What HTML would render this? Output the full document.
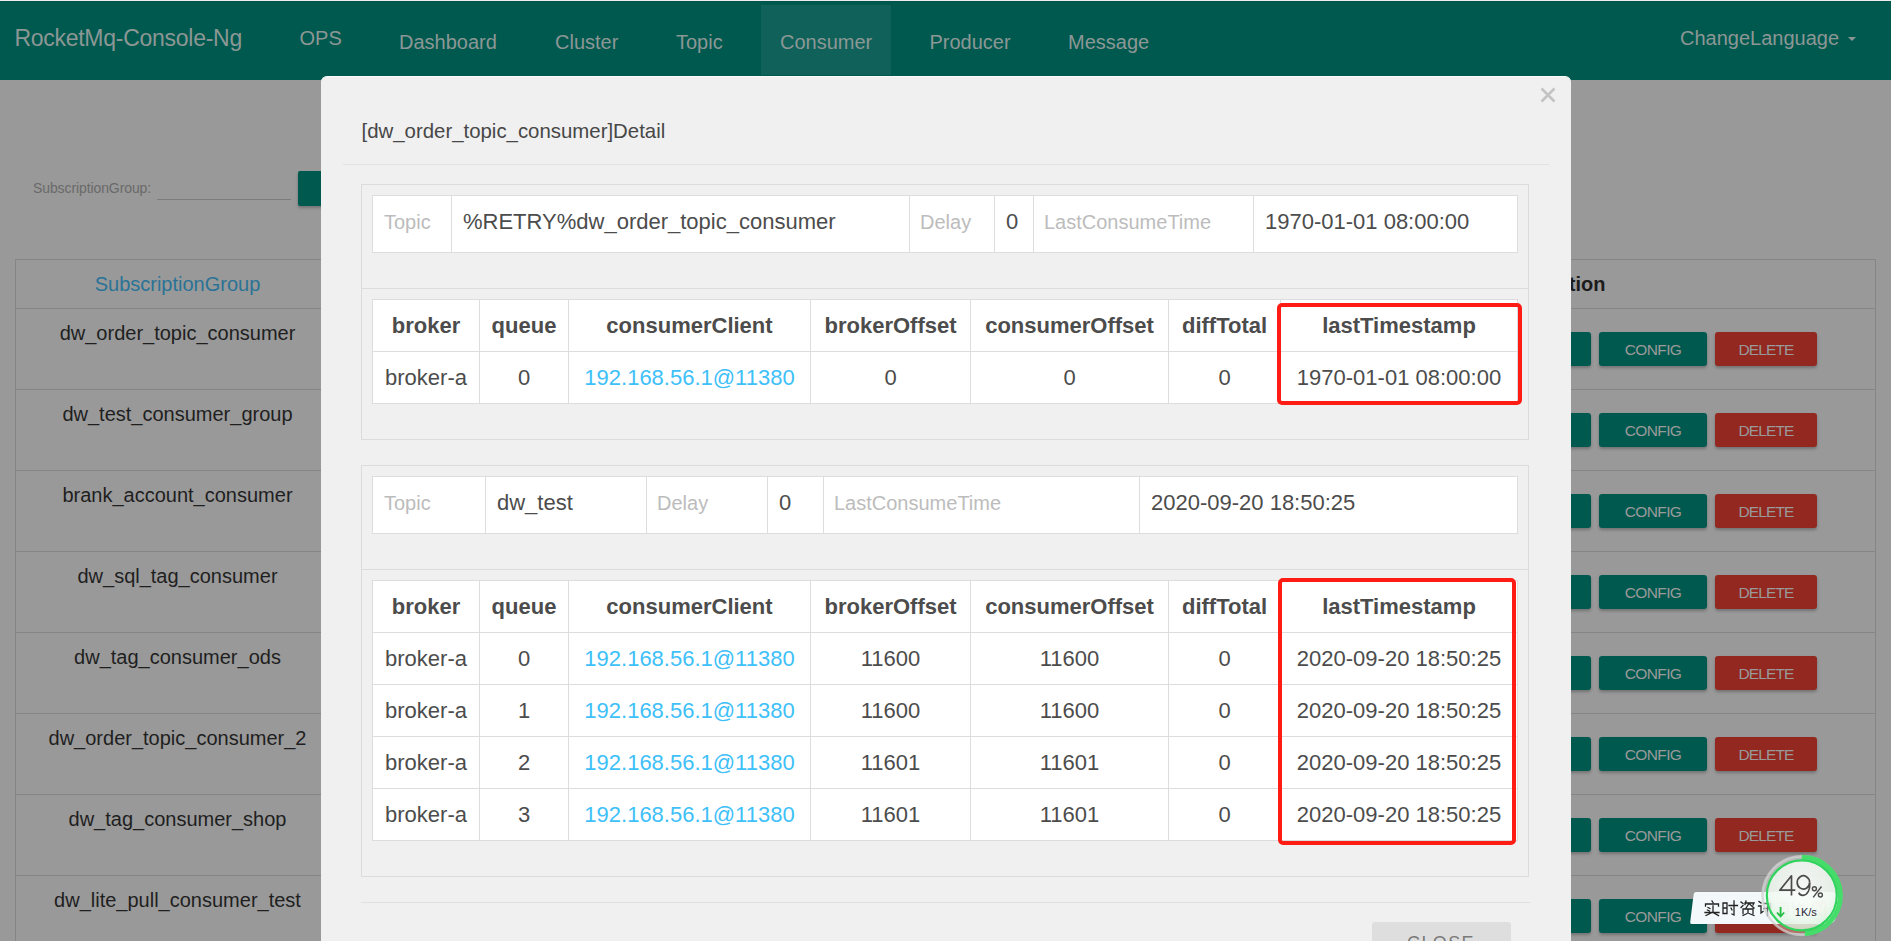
<!DOCTYPE html>
<html><head><meta charset="utf-8"><title>RocketMq-Console-Ng</title>
<style>
html,body{margin:0;padding:0;}
body{width:1891px;height:941px;overflow:hidden;position:relative;background:#999999;font-family:"Liberation Sans", sans-serif;}
.t{position:absolute;white-space:nowrap;line-height:1;font-family:"Liberation Sans", sans-serif;}
.btn{position:absolute;height:34px;line-height:35px;text-align:center;color:#9a9a9a;font-size:15.5px;letter-spacing:-0.6px;border-radius:3px;box-shadow:0 2px 3px rgba(0,0,0,0.25);font-family:"Liberation Sans", sans-serif;}
</style></head><body>
<div style="position:absolute;left:0px;top:0px;width:1891px;height:1px;background:#eeeaee"></div>
<div style="position:absolute;left:0px;top:1px;width:1891px;height:79px;background:#00594f"></div>
<div style="position:absolute;left:0px;top:1px;width:1891px;height:1px;background:#00534a"></div>
<div style="position:absolute;left:761px;top:5px;width:130px;height:70px;background:#0f6159"></div>
<div class="t" style="left:14.4px;top:27.1px;font-size:23px;color:#8c9795;font-weight:400;letter-spacing:-0.27px">RocketMq-Console-Ng</div>
<div class="t" style="left:299.5px;top:27.5px;font-size:20px;color:#8c9795;font-weight:400;">OPS</div>
<div class="t" style="left:399px;top:32px;font-size:20px;color:#8c9795;font-weight:400;">Dashboard</div>
<div class="t" style="left:555px;top:32px;font-size:20px;color:#8c9795;font-weight:400;">Cluster</div>
<div class="t" style="left:676px;top:32px;font-size:20px;color:#8c9795;font-weight:400;">Topic</div>
<div class="t" style="left:780px;top:32px;font-size:20px;color:#8c9795;font-weight:400;">Consumer</div>
<div class="t" style="left:929.5px;top:32px;font-size:20px;color:#8c9795;font-weight:400;">Producer</div>
<div class="t" style="left:1068px;top:32px;font-size:20px;color:#8c9795;font-weight:400;">Message</div>
<div class="t" style="left:1680px;top:28px;font-size:20px;color:#8c9795;font-weight:400;">ChangeLanguage</div>
<div style="position:absolute;left:1847.5px;top:37px;width:0;height:0;border-left:4.6px solid transparent;border-right:4.6px solid transparent;border-top:4.8px solid #8c9795"></div>
<div class="t" style="left:33px;top:181px;font-size:14px;color:#6a6a6a;font-weight:400;letter-spacing:-0.1px">SubscriptionGroup:</div>
<div style="position:absolute;left:157px;top:199px;width:134px;height:1px;background:#7c7c7c"></div>
<div style="position:absolute;left:298px;top:171px;width:40px;height:35px;background:#00594f;border-radius:2px;box-shadow:0 2px 3px rgba(0,0,0,0.25)"></div>
<div style="position:absolute;left:15px;top:259px;width:1861px;height:700px;border:1px solid #858585;box-sizing:border-box"></div>
<div style="position:absolute;left:15px;top:308px;width:1861px;height:1px;background:#858585"></div>
<div style="position:absolute;left:15px;top:389px;width:1861px;height:1px;background:#858585"></div>
<div style="position:absolute;left:15px;top:470px;width:1861px;height:1px;background:#858585"></div>
<div style="position:absolute;left:15px;top:551px;width:1861px;height:1px;background:#858585"></div>
<div style="position:absolute;left:15px;top:632px;width:1861px;height:1px;background:#858585"></div>
<div style="position:absolute;left:15px;top:713px;width:1861px;height:1px;background:#858585"></div>
<div style="position:absolute;left:15px;top:794px;width:1861px;height:1px;background:#858585"></div>
<div style="position:absolute;left:15px;top:875px;width:1861px;height:1px;background:#858585"></div>
<div class="t" style="left:16px;width:323px;text-align:center;top:274px;font-size:20px;color:#2a7396;font-weight:400;">SubscriptionGroup</div>
<div class="t" style="left:1500.5px;top:274px;font-size:20px;color:#1c1c1c;font-weight:700;width:105px;text-align:right">Operation</div>
<div class="t" style="left:16px;width:323px;text-align:center;top:323px;font-size:20px;color:#1f1f1f;font-weight:400;">dw_order_topic_consumer</div>
<div style="position:absolute;left:1540px;top:332px;width:51px;height:34px;background:#00594f;border-radius:3px;box-shadow:0 2px 3px rgba(0,0,0,0.25)"></div>
<div class="btn" style="left:1599px;top:332px;width:108px;background:#00594f">CONFIG</div>
<div class="btn" style="left:1715px;top:332px;width:102px;background:#922820;letter-spacing:-0.9px">DELETE</div>
<div class="t" style="left:16px;width:323px;text-align:center;top:404px;font-size:20px;color:#1f1f1f;font-weight:400;">dw_test_consumer_group</div>
<div style="position:absolute;left:1540px;top:413px;width:51px;height:34px;background:#00594f;border-radius:3px;box-shadow:0 2px 3px rgba(0,0,0,0.25)"></div>
<div class="btn" style="left:1599px;top:413px;width:108px;background:#00594f">CONFIG</div>
<div class="btn" style="left:1715px;top:413px;width:102px;background:#922820;letter-spacing:-0.9px">DELETE</div>
<div class="t" style="left:16px;width:323px;text-align:center;top:485px;font-size:20px;color:#1f1f1f;font-weight:400;">brank_account_consumer</div>
<div style="position:absolute;left:1540px;top:494px;width:51px;height:34px;background:#00594f;border-radius:3px;box-shadow:0 2px 3px rgba(0,0,0,0.25)"></div>
<div class="btn" style="left:1599px;top:494px;width:108px;background:#00594f">CONFIG</div>
<div class="btn" style="left:1715px;top:494px;width:102px;background:#922820;letter-spacing:-0.9px">DELETE</div>
<div class="t" style="left:16px;width:323px;text-align:center;top:566px;font-size:20px;color:#1f1f1f;font-weight:400;">dw_sql_tag_consumer</div>
<div style="position:absolute;left:1540px;top:575px;width:51px;height:34px;background:#00594f;border-radius:3px;box-shadow:0 2px 3px rgba(0,0,0,0.25)"></div>
<div class="btn" style="left:1599px;top:575px;width:108px;background:#00594f">CONFIG</div>
<div class="btn" style="left:1715px;top:575px;width:102px;background:#922820;letter-spacing:-0.9px">DELETE</div>
<div class="t" style="left:16px;width:323px;text-align:center;top:647px;font-size:20px;color:#1f1f1f;font-weight:400;">dw_tag_consumer_ods</div>
<div style="position:absolute;left:1540px;top:656px;width:51px;height:34px;background:#00594f;border-radius:3px;box-shadow:0 2px 3px rgba(0,0,0,0.25)"></div>
<div class="btn" style="left:1599px;top:656px;width:108px;background:#00594f">CONFIG</div>
<div class="btn" style="left:1715px;top:656px;width:102px;background:#922820;letter-spacing:-0.9px">DELETE</div>
<div class="t" style="left:16px;width:323px;text-align:center;top:728px;font-size:20px;color:#1f1f1f;font-weight:400;">dw_order_topic_consumer_2</div>
<div style="position:absolute;left:1540px;top:737px;width:51px;height:34px;background:#00594f;border-radius:3px;box-shadow:0 2px 3px rgba(0,0,0,0.25)"></div>
<div class="btn" style="left:1599px;top:737px;width:108px;background:#00594f">CONFIG</div>
<div class="btn" style="left:1715px;top:737px;width:102px;background:#922820;letter-spacing:-0.9px">DELETE</div>
<div class="t" style="left:16px;width:323px;text-align:center;top:809px;font-size:20px;color:#1f1f1f;font-weight:400;">dw_tag_consumer_shop</div>
<div style="position:absolute;left:1540px;top:818px;width:51px;height:34px;background:#00594f;border-radius:3px;box-shadow:0 2px 3px rgba(0,0,0,0.25)"></div>
<div class="btn" style="left:1599px;top:818px;width:108px;background:#00594f">CONFIG</div>
<div class="btn" style="left:1715px;top:818px;width:102px;background:#922820;letter-spacing:-0.9px">DELETE</div>
<div class="t" style="left:16px;width:323px;text-align:center;top:890px;font-size:20px;color:#1f1f1f;font-weight:400;">dw_lite_pull_consumer_test</div>
<div style="position:absolute;left:1540px;top:899px;width:51px;height:34px;background:#00594f;border-radius:3px;box-shadow:0 2px 3px rgba(0,0,0,0.25)"></div>
<div class="btn" style="left:1599px;top:899px;width:108px;background:#00594f">CONFIG</div>
<div class="btn" style="left:1715px;top:899px;width:102px;background:#922820;letter-spacing:-0.9px">DELETE</div>
<div id="modal" style="position:absolute;left:321px;top:76px;width:1250px;height:900px;background:#f0f0f0;border-radius:6px;border-top:1px solid #fafafa;box-sizing:border-box"></div>
<svg style="position:absolute;left:1539px;top:86px" width="18" height="18" viewBox="0 0 18 18"><path d="M2.5 2.5L15.5 15.5M15.5 2.5L2.5 15.5" stroke="#c3c3c3" stroke-width="2.6" fill="none"/></svg>
<div class="t" style="left:361.5px;top:121px;font-size:20.4px;color:#474747;font-weight:400;">[dw_order_topic_consumer]Detail</div>
<div style="position:absolute;left:343px;top:164px;width:1206px;height:1px;background:#e2e2e2"></div>
<div style="position:absolute;left:361px;top:184px;width:1168px;height:256px;border:1px solid #dcdcdc;box-sizing:border-box"></div>
<div style="position:absolute;left:361px;top:288px;width:1168px;height:1px;background:#dcdcdc"></div>
<div style="position:absolute;left:372px;top:195px;width:1146px;height:58px;background:#fff;border:1px solid #dddddd;box-sizing:border-box"></div>
<div style="position:absolute;left:451px;top:195px;width:1px;height:58px;background:#dddddd"></div>
<div style="position:absolute;left:909px;top:195px;width:1px;height:58px;background:#dddddd"></div>
<div style="position:absolute;left:994px;top:195px;width:1px;height:58px;background:#dddddd"></div>
<div style="position:absolute;left:1033px;top:195px;width:1px;height:58px;background:#dddddd"></div>
<div style="position:absolute;left:1253px;top:195px;width:1px;height:58px;background:#dddddd"></div>
<div class="t" style="left:384px;top:212px;font-size:20px;color:#bcbcbc;font-weight:400;">Topic</div>
<div class="t" style="left:463px;top:211px;font-size:22px;color:#4c4c4c;font-weight:400;">%RETRY%dw_order_topic_consumer</div>
<div class="t" style="left:920px;top:212px;font-size:20px;color:#bcbcbc;font-weight:400;">Delay</div>
<div class="t" style="left:1006px;top:211px;font-size:22px;color:#4c4c4c;font-weight:400;">0</div>
<div class="t" style="left:1044px;top:212px;font-size:20px;color:#bcbcbc;font-weight:400;">LastConsumeTime</div>
<div class="t" style="left:1265px;top:211px;font-size:22px;color:#4c4c4c;font-weight:400;">1970-01-01 08:00:00</div>
<div style="position:absolute;left:372px;top:299px;width:1146px;height:105px;background:#fff;border:1px solid #dddddd;box-sizing:border-box"></div>
<div style="position:absolute;left:479px;top:299px;width:1px;height:105px;background:#dddddd"></div>
<div style="position:absolute;left:568px;top:299px;width:1px;height:105px;background:#dddddd"></div>
<div style="position:absolute;left:810px;top:299px;width:1px;height:105px;background:#dddddd"></div>
<div style="position:absolute;left:970px;top:299px;width:1px;height:105px;background:#dddddd"></div>
<div style="position:absolute;left:1168px;top:299px;width:1px;height:105px;background:#dddddd"></div>
<div style="position:absolute;left:1280px;top:299px;width:1px;height:105px;background:#dddddd"></div>
<div style="position:absolute;left:372px;top:351px;width:1146px;height:1px;background:#dddddd"></div>
<div class="t" style="left:373px;width:106px;text-align:center;top:315px;font-size:22px;color:#4c4c4c;font-weight:700;">broker</div>
<div class="t" style="left:480px;width:88px;text-align:center;top:315px;font-size:22px;color:#4c4c4c;font-weight:700;">queue</div>
<div class="t" style="left:569px;width:241px;text-align:center;top:315px;font-size:22px;color:#4c4c4c;font-weight:700;">consumerClient</div>
<div class="t" style="left:811px;width:159px;text-align:center;top:315px;font-size:22px;color:#4c4c4c;font-weight:700;">brokerOffset</div>
<div class="t" style="left:971px;width:197px;text-align:center;top:315px;font-size:22px;color:#4c4c4c;font-weight:700;">consumerOffset</div>
<div class="t" style="left:1169px;width:111px;text-align:center;top:315px;font-size:22px;color:#4c4c4c;font-weight:700;">diffTotal</div>
<div class="t" style="left:1281px;width:236px;text-align:center;top:315px;font-size:22px;color:#4c4c4c;font-weight:700;">lastTimestamp</div>
<div class="t" style="left:373px;width:106px;text-align:center;top:367px;font-size:22px;color:#4c4c4c;font-weight:400;">broker-a</div>
<div class="t" style="left:480px;width:88px;text-align:center;top:367px;font-size:22px;color:#4c4c4c;font-weight:400;">0</div>
<div class="t" style="left:569px;width:241px;text-align:center;top:367px;font-size:22px;color:#3ec0f8;font-weight:400;">192.168.56.1@11380</div>
<div class="t" style="left:811px;width:159px;text-align:center;top:367px;font-size:22px;color:#4c4c4c;font-weight:400;">0</div>
<div class="t" style="left:971px;width:197px;text-align:center;top:367px;font-size:22px;color:#4c4c4c;font-weight:400;">0</div>
<div class="t" style="left:1169px;width:111px;text-align:center;top:367px;font-size:22px;color:#4c4c4c;font-weight:400;">0</div>
<div class="t" style="left:1281px;width:236px;text-align:center;top:367px;font-size:22px;color:#4c4c4c;font-weight:400;">1970-01-01 08:00:00</div>
<div style="position:absolute;left:361px;top:465px;width:1168px;height:412px;border:1px solid #dcdcdc;box-sizing:border-box"></div>
<div style="position:absolute;left:361px;top:569px;width:1168px;height:1px;background:#dcdcdc"></div>
<div style="position:absolute;left:372px;top:476px;width:1146px;height:58px;background:#fff;border:1px solid #dddddd;box-sizing:border-box"></div>
<div style="position:absolute;left:485px;top:476px;width:1px;height:58px;background:#dddddd"></div>
<div style="position:absolute;left:646px;top:476px;width:1px;height:58px;background:#dddddd"></div>
<div style="position:absolute;left:767px;top:476px;width:1px;height:58px;background:#dddddd"></div>
<div style="position:absolute;left:823px;top:476px;width:1px;height:58px;background:#dddddd"></div>
<div style="position:absolute;left:1139px;top:476px;width:1px;height:58px;background:#dddddd"></div>
<div class="t" style="left:384px;top:493px;font-size:20px;color:#bcbcbc;font-weight:400;">Topic</div>
<div class="t" style="left:497px;top:492px;font-size:22px;color:#4c4c4c;font-weight:400;">dw_test</div>
<div class="t" style="left:657px;top:493px;font-size:20px;color:#bcbcbc;font-weight:400;">Delay</div>
<div class="t" style="left:779px;top:492px;font-size:22px;color:#4c4c4c;font-weight:400;">0</div>
<div class="t" style="left:834px;top:493px;font-size:20px;color:#bcbcbc;font-weight:400;">LastConsumeTime</div>
<div class="t" style="left:1151px;top:492px;font-size:22px;color:#4c4c4c;font-weight:400;">2020-09-20 18:50:25</div>
<div style="position:absolute;left:372px;top:580px;width:1146px;height:261px;background:#fff;border:1px solid #dddddd;box-sizing:border-box"></div>
<div style="position:absolute;left:479px;top:580px;width:1px;height:261px;background:#dddddd"></div>
<div style="position:absolute;left:568px;top:580px;width:1px;height:261px;background:#dddddd"></div>
<div style="position:absolute;left:810px;top:580px;width:1px;height:261px;background:#dddddd"></div>
<div style="position:absolute;left:970px;top:580px;width:1px;height:261px;background:#dddddd"></div>
<div style="position:absolute;left:1168px;top:580px;width:1px;height:261px;background:#dddddd"></div>
<div style="position:absolute;left:1280px;top:580px;width:1px;height:261px;background:#dddddd"></div>
<div style="position:absolute;left:372px;top:632px;width:1146px;height:1px;background:#dddddd"></div>
<div style="position:absolute;left:372px;top:684px;width:1146px;height:1px;background:#dddddd"></div>
<div style="position:absolute;left:372px;top:736px;width:1146px;height:1px;background:#dddddd"></div>
<div style="position:absolute;left:372px;top:788px;width:1146px;height:1px;background:#dddddd"></div>
<div class="t" style="left:373px;width:106px;text-align:center;top:596px;font-size:22px;color:#4c4c4c;font-weight:700;">broker</div>
<div class="t" style="left:480px;width:88px;text-align:center;top:596px;font-size:22px;color:#4c4c4c;font-weight:700;">queue</div>
<div class="t" style="left:569px;width:241px;text-align:center;top:596px;font-size:22px;color:#4c4c4c;font-weight:700;">consumerClient</div>
<div class="t" style="left:811px;width:159px;text-align:center;top:596px;font-size:22px;color:#4c4c4c;font-weight:700;">brokerOffset</div>
<div class="t" style="left:971px;width:197px;text-align:center;top:596px;font-size:22px;color:#4c4c4c;font-weight:700;">consumerOffset</div>
<div class="t" style="left:1169px;width:111px;text-align:center;top:596px;font-size:22px;color:#4c4c4c;font-weight:700;">diffTotal</div>
<div class="t" style="left:1281px;width:236px;text-align:center;top:596px;font-size:22px;color:#4c4c4c;font-weight:700;">lastTimestamp</div>
<div class="t" style="left:373px;width:106px;text-align:center;top:648px;font-size:22px;color:#4c4c4c;font-weight:400;">broker-a</div>
<div class="t" style="left:480px;width:88px;text-align:center;top:648px;font-size:22px;color:#4c4c4c;font-weight:400;">0</div>
<div class="t" style="left:569px;width:241px;text-align:center;top:648px;font-size:22px;color:#3ec0f8;font-weight:400;">192.168.56.1@11380</div>
<div class="t" style="left:811px;width:159px;text-align:center;top:648px;font-size:22px;color:#4c4c4c;font-weight:400;">11600</div>
<div class="t" style="left:971px;width:197px;text-align:center;top:648px;font-size:22px;color:#4c4c4c;font-weight:400;">11600</div>
<div class="t" style="left:1169px;width:111px;text-align:center;top:648px;font-size:22px;color:#4c4c4c;font-weight:400;">0</div>
<div class="t" style="left:1281px;width:236px;text-align:center;top:648px;font-size:22px;color:#4c4c4c;font-weight:400;">2020-09-20 18:50:25</div>
<div class="t" style="left:373px;width:106px;text-align:center;top:700px;font-size:22px;color:#4c4c4c;font-weight:400;">broker-a</div>
<div class="t" style="left:480px;width:88px;text-align:center;top:700px;font-size:22px;color:#4c4c4c;font-weight:400;">1</div>
<div class="t" style="left:569px;width:241px;text-align:center;top:700px;font-size:22px;color:#3ec0f8;font-weight:400;">192.168.56.1@11380</div>
<div class="t" style="left:811px;width:159px;text-align:center;top:700px;font-size:22px;color:#4c4c4c;font-weight:400;">11600</div>
<div class="t" style="left:971px;width:197px;text-align:center;top:700px;font-size:22px;color:#4c4c4c;font-weight:400;">11600</div>
<div class="t" style="left:1169px;width:111px;text-align:center;top:700px;font-size:22px;color:#4c4c4c;font-weight:400;">0</div>
<div class="t" style="left:1281px;width:236px;text-align:center;top:700px;font-size:22px;color:#4c4c4c;font-weight:400;">2020-09-20 18:50:25</div>
<div class="t" style="left:373px;width:106px;text-align:center;top:752px;font-size:22px;color:#4c4c4c;font-weight:400;">broker-a</div>
<div class="t" style="left:480px;width:88px;text-align:center;top:752px;font-size:22px;color:#4c4c4c;font-weight:400;">2</div>
<div class="t" style="left:569px;width:241px;text-align:center;top:752px;font-size:22px;color:#3ec0f8;font-weight:400;">192.168.56.1@11380</div>
<div class="t" style="left:811px;width:159px;text-align:center;top:752px;font-size:22px;color:#4c4c4c;font-weight:400;">11601</div>
<div class="t" style="left:971px;width:197px;text-align:center;top:752px;font-size:22px;color:#4c4c4c;font-weight:400;">11601</div>
<div class="t" style="left:1169px;width:111px;text-align:center;top:752px;font-size:22px;color:#4c4c4c;font-weight:400;">0</div>
<div class="t" style="left:1281px;width:236px;text-align:center;top:752px;font-size:22px;color:#4c4c4c;font-weight:400;">2020-09-20 18:50:25</div>
<div class="t" style="left:373px;width:106px;text-align:center;top:804px;font-size:22px;color:#4c4c4c;font-weight:400;">broker-a</div>
<div class="t" style="left:480px;width:88px;text-align:center;top:804px;font-size:22px;color:#4c4c4c;font-weight:400;">3</div>
<div class="t" style="left:569px;width:241px;text-align:center;top:804px;font-size:22px;color:#3ec0f8;font-weight:400;">192.168.56.1@11380</div>
<div class="t" style="left:811px;width:159px;text-align:center;top:804px;font-size:22px;color:#4c4c4c;font-weight:400;">11601</div>
<div class="t" style="left:971px;width:197px;text-align:center;top:804px;font-size:22px;color:#4c4c4c;font-weight:400;">11601</div>
<div class="t" style="left:1169px;width:111px;text-align:center;top:804px;font-size:22px;color:#4c4c4c;font-weight:400;">0</div>
<div class="t" style="left:1281px;width:236px;text-align:center;top:804px;font-size:22px;color:#4c4c4c;font-weight:400;">2020-09-20 18:50:25</div>
<div style="position:absolute;left:361px;top:902px;width:1169px;height:1px;background:#e0e0e0"></div>
<div style="position:absolute;left:1372px;top:922px;width:139px;height:40px;background:#dedede;border-radius:3px"></div>
<div class="t" style="left:1407px;top:934px;font-size:18px;color:#7a7a7a;font-weight:400;letter-spacing:1.4px">CLOSE</div>
<div style="position:absolute;left:1277px;top:303px;width:245px;height:102px;border:4px solid #ff1c14;border-radius:5px;box-sizing:border-box"></div>
<div style="position:absolute;left:1278px;top:578px;width:238px;height:267px;border:4.5px solid #ff1c14;border-radius:5px;box-sizing:border-box"></div>
<div style="position:absolute;left:1690px;top:892px;width:145px;height:31.5px;background:#f3f9fb;border-radius:2px 6px 6px 2px;transform-origin:0 100%;transform:skewX(-7deg);box-shadow:0 0 1px rgba(0,0,0,0.25)"></div>
<svg style="position:absolute;left:1704px;top:900px" width="125" height="18" viewBox="0 0 125 18">
<g fill="none" stroke="#222" stroke-width="1.3" stroke-linecap="square">
<path d="M8 1L9 2.5M1.5 6V4H14.5V6M4 7.5L6 8.5M3.5 10L5.5 11M9 6V11.5M1 12.5H15M8 12.5L2 15.5M9 12.5L14.5 15.5"/>
<path d="M19 3H23V13.5H19ZM19 8H23M25 5.5H33.5M30 1V15L28 14M27 8L28 10"/>
<path d="M37 2L39 3.5M37 7.5L39 5.5M42 1L41 4.5M41 3H50L49 5M45 3.5L42 8M45.5 4L50 8M39 9H49V13.5M39 9V13.5M44 9.5V12.5M43 13.5L39 15.5M45 13.5L50 15.5"/>
<path d="M55 1.5L57 3M54.5 6H57V13L59 11.5M60 3.5H66.5V13L69 14.5M63.5 3.5V15.5M60 8.5H65.5"/>
</g>
<rect x="108" y="1" width="14" height="15" fill="#f5d5cf"/><path d="M111 13V4L119 13V4" stroke="#fbeeea" stroke-width="2" fill="none"/><g fill="none" stroke="#c8c8c8" stroke-width="1.2"><path d="M73 3H86M75 6H84V12H75ZM75 9H84M78 3V15M77 12L84 15M88 2L90 4M87 6H93M90 6V15M95 2V15M93 6H99"/></g>
</svg>
<svg style="position:absolute;left:1752px;top:846px" width="100" height="95" viewBox="0 0 100 95">
<defs><radialGradient id="g" cx="50%" cy="35%" r="65%"><stop offset="0%" stop-color="#ffffff" stop-opacity="0.86"/><stop offset="70%" stop-color="#f0f9f0" stop-opacity="0.82"/><stop offset="100%" stop-color="#d5efd8" stop-opacity="0.78"/></radialGradient></defs>
<circle cx="49.8" cy="49.6" r="39.3" fill="rgba(240,248,244,0.35)" stroke="rgba(210,210,210,0.75)" stroke-width="2.6"/>
<path d="M49.8 11.3 A38.3 38.3 0 0 1 52.8 87.8" fill="none" stroke="#45dd69" stroke-width="5"/>
<circle cx="49.8" cy="49.4" r="35" fill="url(#g)" stroke="#30d45d" stroke-width="2.2"/>
<g fill="none" stroke="#4a4a4a" stroke-width="1.7" stroke-linejoin="round">
<path d="M39.5 49.5V29.8L27.8 44.2H43.3"/>
<path d="M57.6 36.5A6.2 6.6 0 1 1 57.6 36.3M57.8 36.5C58 43 56 49 51 49.3C48.5 49.4 47.3 48 46.8 46.6"/>
</g>
<g fill="none" stroke="#4a4a4a" stroke-width="1.4"><circle cx="62.4" cy="42.8" r="2"/><circle cx="68.4" cy="49" r="2"/><path d="M69.5 40.5L61.2 51.4"/></g>
<path d="M28.6 61V70M25 66.5L28.6 70.5L32.2 66.5" stroke="#22c043" stroke-width="1.8" fill="none"/>
<text x="42.8" y="69.7" font-family="Liberation Sans" font-size="11" fill="#2a2a3a">1K/s</text>
</svg>
</body></html>
